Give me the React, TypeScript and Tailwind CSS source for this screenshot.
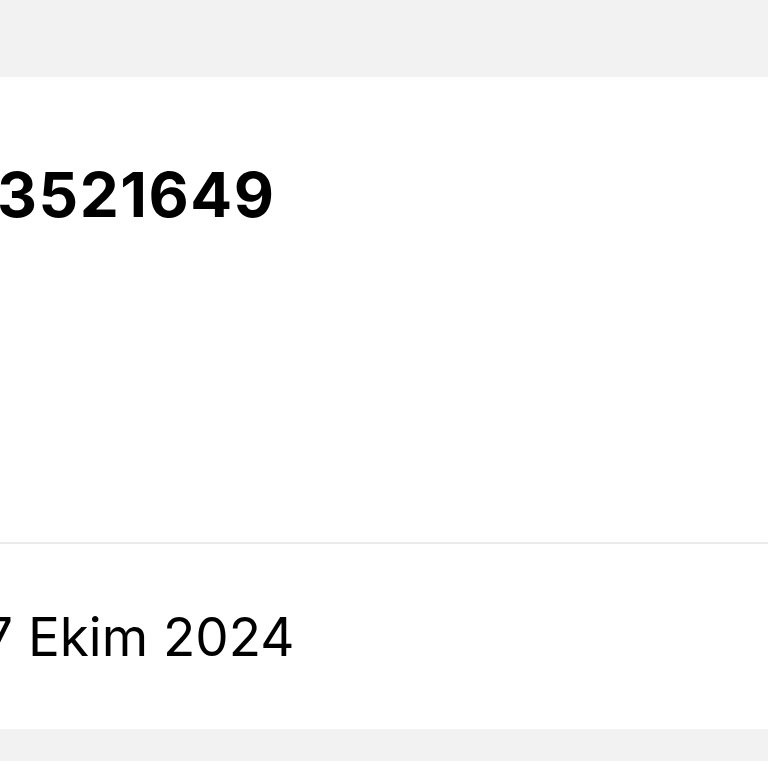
export default function App() {
  return (
    <div className="w-[768px] h-[768px] overflow-hidden bg-[#f2f2f2]" style={{ fontFamily: "Inter, 'Noto Sans', sans-serif" }}>
      <div className="h-[77px]" />
      <div className="bg-white h-[465px] pt-[87px]">
        <div className="ml-[-3px] text-[62px] leading-[62px] font-bold tracking-[1.5px] text-black whitespace-nowrap">3521649</div>
      </div>
      <div className="h-[2px] bg-[#ebebeb]" />
      <div className="bg-white h-[185px] pt-[67px]">
        <div className="ml-[-17px] text-[53px] leading-[53px] font-normal text-black whitespace-nowrap">7 Ekim 2024</div>
      </div>
      <div className="h-[32px]" />
      <div className="bg-white h-[40px]" />
    </div>
  );
}
